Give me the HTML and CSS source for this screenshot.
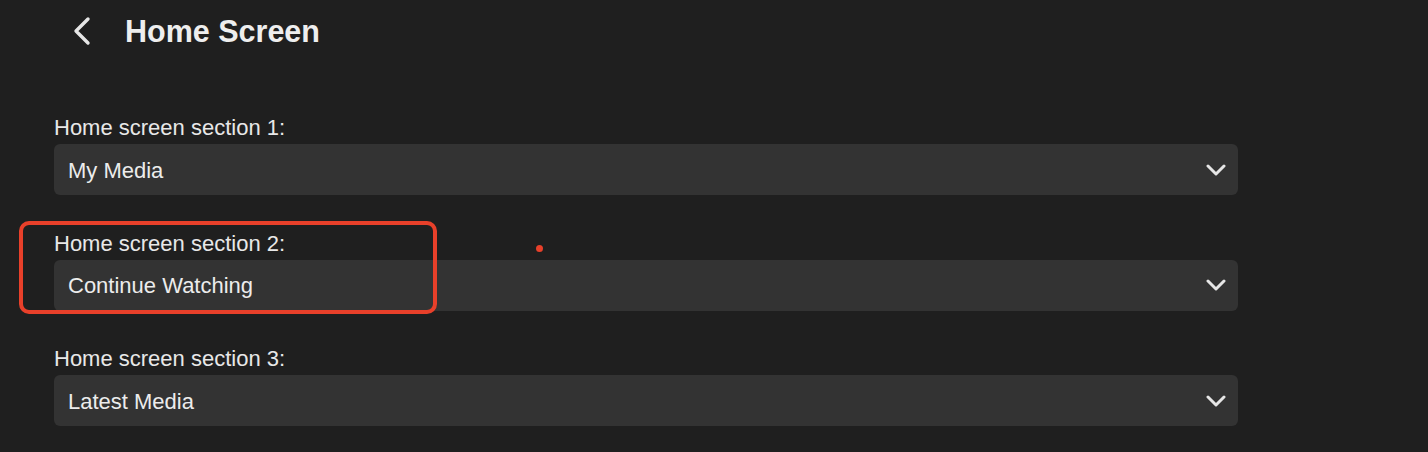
FILE: index.html
```html
<!DOCTYPE html>
<html>
<head>
<meta charset="utf-8">
<link rel="stylesheet" href="styles.css">
</head>
<body>
<div class="page">
  <header class="header">
    <button class="back" aria-label="Back">
      <svg width="20" height="30" viewBox="0 0 20 30"><path d="M16 3 L4 15 L16 27" fill="none" stroke="#e6e6e6" stroke-width="3.4" stroke-linecap="round" stroke-linejoin="round"/></svg>
    </button>
    <h1 class="title">Home Screen</h1>
  </header>
  <main class="form">
    <div class="field">
      <label class="label">Home screen section 1:</label>
      <div class="select"><span>My Media</span>
        <svg class="chev" width="20" height="12" viewBox="0 0 20 12"><path d="M2 2 L10 10 L18 2" fill="none" stroke="#e6e6e6" stroke-width="3" stroke-linecap="round" stroke-linejoin="round"/></svg>
      </div>
    </div>
    <div class="field">
      <label class="label">Home screen section 2:</label>
      <div class="select"><span>Continue Watching</span>
        <svg class="chev" width="20" height="12" viewBox="0 0 20 12"><path d="M2 2 L10 10 L18 2" fill="none" stroke="#e6e6e6" stroke-width="3" stroke-linecap="round" stroke-linejoin="round"/></svg>
      </div>
    </div>
    <div class="field">
      <label class="label">Home screen section 3:</label>
      <div class="select"><span>Latest Media</span>
        <svg class="chev" width="20" height="12" viewBox="0 0 20 12"><path d="M2 2 L10 10 L18 2" fill="none" stroke="#e6e6e6" stroke-width="3" stroke-linecap="round" stroke-linejoin="round"/></svg>
      </div>
    </div>
  </main>
  <div class="highlight"></div>
  <div class="dot"></div>
</div>
</body>
</html>
```
FILE: styles.css
```css
* { box-sizing: border-box; }
html, body { margin: 0; padding: 0; background: #1f1f1f; }
body { font-family: "Liberation Sans", Arial, sans-serif; color: #e8e8e8; }
.page { position: relative; width: 1428px; height: 452px; overflow: hidden; }
.header { display: flex; align-items: center; height: 62px; padding-left: 72px; }
.back { background: none; border: 0; padding: 0; width: 20px; height: 30px; display: flex; align-items: center; margin-right: 33px; }
.title { margin: 0; font-size: 30.5px; font-weight: 700; color: #eeeeee; }
.form { padding: 54px 0 0 54px; width: 1238px; display: flex; flex-direction: column; gap: 36.5px; }
.field { display: flex; flex-direction: column; }
.label { font-size: 22px; line-height: 24px; height: 24px; margin-bottom: 4px; color: #e8e8e8; }
.select { height: 51px; background: #333333; border-radius: 6px; display: flex; align-items: center; justify-content: space-between; padding: 2px 12px 0 14px; font-size: 22px; color: #ececec; }
.chev { display: block; margin-top: -2px; }
.highlight { position: absolute; left: 19px; top: 221px; width: 418px; height: 93px; border: 4px solid #e8402a; border-radius: 10px; }
.dot { position: absolute; left: 536px; top: 245px; width: 7px; height: 7px; border-radius: 50%; background: #e8402a; }
```
